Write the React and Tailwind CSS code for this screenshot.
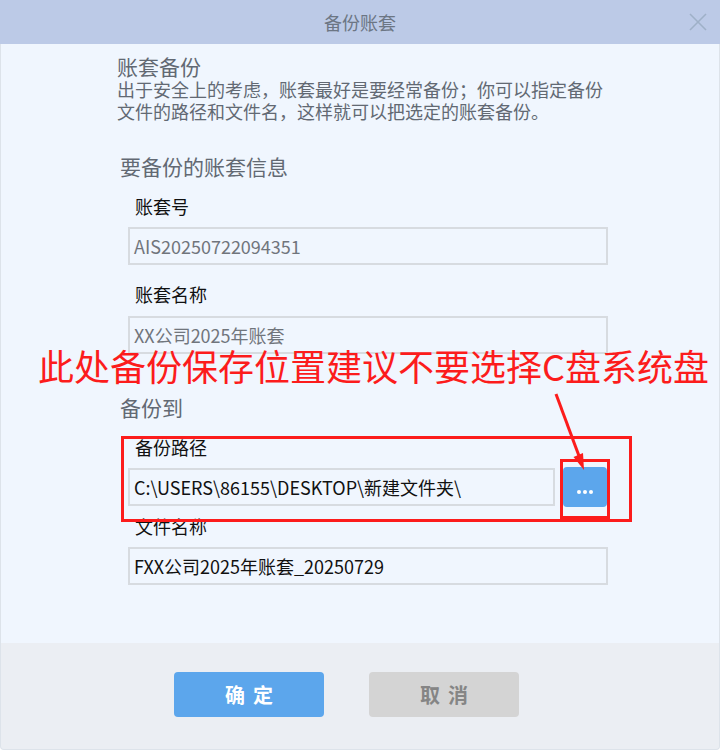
import React from "react";

const font = { fontFamily: '"Noto Sans CJK SC", "Noto Sans", sans-serif' };

function Field({ children, dark }) {
  return (
    <div
      className={`h-[38px] w-[480px] border-2 border-[#d7dbe0] bg-[#f0f6fe] flex items-center pl-[4px] text-[18px] leading-[22px] ${dark ? "text-[#111111]" : "text-[#70757c]"}`}
    >
      {children}
    </div>
  );
}

export default function App() {
  return (
    <div className="relative w-[720px] h-[750px] flex flex-col bg-white" style={font}>
      {/* Title bar */}
      <div className="h-[44px] bg-[#bccae7] grid grid-cols-[1fr_auto_1fr] items-center">
        <div />
        <div className="text-[18px] leading-[24px] text-[#6c7684]">备份账套</div>
        <div className="flex justify-end pr-[13px]">
          <svg width="18" height="18" viewBox="0 0 18 18">
            <line x1="1" y1="1" x2="17" y2="17" stroke="#9fb0c8" strokeWidth="1.6" />
            <line x1="17" y1="1" x2="1" y2="17" stroke="#9fb0c8" strokeWidth="1.6" />
          </svg>
        </div>
      </div>

      {/* Body */}
      <div className="h-[599px] bg-[#f0f6fe] border-x border-[#dde3ea] flex flex-col pt-[10px] pl-[116px]">
        <div className="text-[21px] leading-[24px] text-[#626973]">账套备份</div>
        <div className="text-[18px] leading-[22px] text-[#626973]">出于安全上的考虑，账套最好是要经常备份；你可以指定备份</div>
        <div className="text-[18px] leading-[22px] text-[#626973]">文件的路径和文件名，这样就可以把选定的账套备份。</div>

        <div className="mt-[32px] ml-[3px] text-[21px] leading-[24px] text-[#626973]">要备份的账套信息</div>

        <div className="ml-[11px] flex flex-col">
          <div className="mt-[17px] ml-[7px] text-[18px] leading-[22px] text-[#111111]">账套号</div>
          <div className="mt-[10px]">
            <Field>AIS20250722094351</Field>
          </div>
          <div className="mt-[18px] ml-[7px] text-[18px] leading-[22px] text-[#111111]">账套名称</div>
          <div className="mt-[11px]">
            <Field>XX公司2025年账套</Field>
          </div>
        </div>

        <div className="mt-[41px] ml-[3px] text-[21px] leading-[24px] text-[#626973]">备份到</div>

        <div className="ml-[11px] flex flex-col">
          <div className="mt-[17px] ml-[7px] text-[18px] leading-[22px] text-[#111111]">备份路径</div>
          <div className="mt-[9px] flex items-center gap-[8px] h-[40px]">
            <div className="h-[38px] w-[427px] border-2 border-[#d7dbe0] bg-[#f0f6fe] flex items-center pl-[4px] text-[18px] leading-[22px] text-[#111111]">
              C:\USERS\86155\DESKTOP\新建文件夹\
            </div>
            <div className="h-[40px] w-[44px] rounded-[4px] bg-[#5ca6ec] flex justify-center gap-[2px] pt-[23px]">
              <span className="w-[4px] h-[4px] rounded-full bg-white" />
              <span className="w-[4px] h-[4px] rounded-full bg-white" />
              <span className="w-[4px] h-[4px] rounded-full bg-white" />
            </div>
          </div>
          <div className="mt-[8px] ml-[7px] text-[18px] leading-[22px] text-[#111111]">文件名称</div>
          <div className="mt-[10px]">
            <Field dark>FXX公司2025年账套_20250729</Field>
          </div>
        </div>
      </div>

      {/* Footer */}
      <div className="flex-1 bg-[#ebeef3] border-x border-b border-[#dde3ea] rounded-b-[4px] flex items-start pt-[29px] pl-[173px] gap-[45px]">
        <div className="w-[150px] h-[45px] rounded-[4px] bg-[#5ca6ec] flex items-center justify-center text-white text-[20px] font-bold tracking-[8px] pl-[8px]">
          确定
        </div>
        <div className="w-[150px] h-[45px] rounded-[4px] bg-[#d4d4d4] flex items-center justify-center text-[#858585] text-[20px] font-bold tracking-[8px] pl-[8px]">
          取消
        </div>
      </div>

      {/* Annotations */}
      <div className="absolute left-[38px] top-[344px] text-[36px] leading-[42px] font-normal text-[#fc1c1c] whitespace-nowrap">
        此处备份保存位置建议不要选择C盘系统盘
      </div>
      <div className="absolute left-[121px] top-[436px] w-[511px] h-[86px] border-[3px] border-[#fc1c1c]" />
      <div className="absolute left-[560px] top-[459px] w-[50px] h-[60px] border-[3px] border-[#fc1c1c]" />
      <svg className="absolute left-0 top-0 pointer-events-none" width="720" height="750">
        <line x1="556" y1="394" x2="579" y2="456" stroke="#fc1c1c" strokeWidth="3" />
        <polygon points="584,470 583,453 573.5,457" fill="#fc1c1c" />
      </svg>
    </div>
  );
}
